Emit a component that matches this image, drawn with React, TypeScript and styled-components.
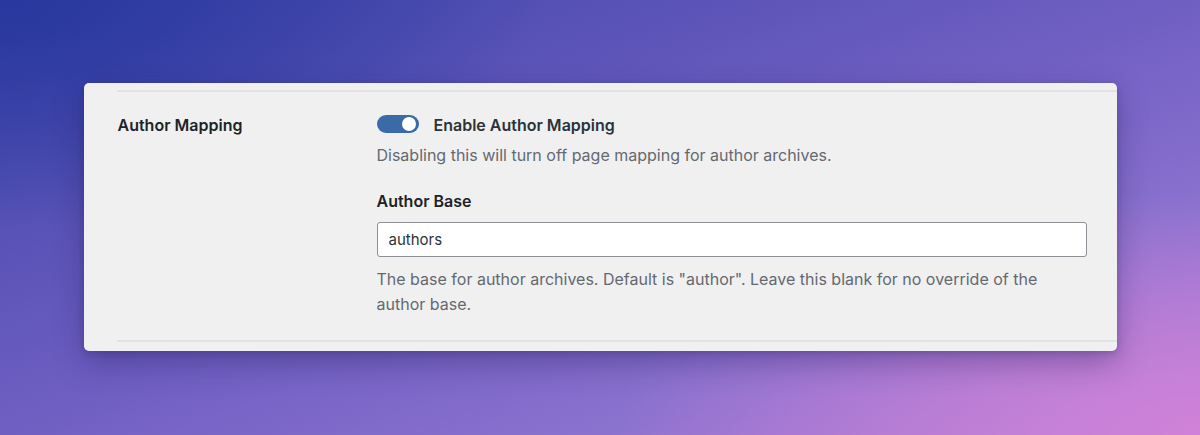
import styled, { createGlobalStyle } from "styled-components";

const GlobalStyle = createGlobalStyle`
    html, body {
        margin: 0;
        padding: 0;
    }
    body {
        font-family: Inter, "Noto Sans", sans-serif;
        -webkit-font-smoothing: antialiased;
    }
`;

type ToggleProps = {
    on: boolean;
};

export default function App() {
    return (
        <>
            <GlobalStyle />
            <Backdrop>
                <SettingsCard>
                    <Rule />
                    <SettingsRow>
                        <RowLabel>Author Mapping</RowLabel>
                        <RowField>
                            <ToggleLine>
                                <Toggle on={true}>
                                    <Knob on={true} />
                                </Toggle>
                                <ToggleText>Enable Author Mapping</ToggleText>
                            </ToggleLine>
                            <HelpText>Disabling this will turn off page mapping for author archives.</HelpText>
                            <FieldLabel>Author Base</FieldLabel>
                            <TextInput defaultValue="authors" />
                            <HelpText wide>
                                The base for author archives. Default is "author". Leave this blank for no override of the author base.
                            </HelpText>
                        </RowField>
                    </SettingsRow>
                    <Rule />
                </SettingsCard>
            </Backdrop>
        </>
    );
}

const Backdrop = styled.div`
    width: 1200px;
    height: 435px;
    box-sizing: border-box;
    padding-top: 83px;
    display: flex;
    justify-content: center;
    align-items: flex-start;
    background:
        radial-gradient(ellipse 70% 80% at 100% 100%, rgba(208, 130, 216, 0.95), rgba(208, 130, 216, 0) 70%),
        radial-gradient(ellipse 60% 70% at 0% 0%, rgba(40, 56, 158, 1), rgba(40, 56, 158, 0) 75%),
        linear-gradient(160deg, #3d44a8 0%, #6b5cc0 45%, #8b72cf 75%, #b97fd6 100%);
    overflow: hidden;
`;

const SettingsCard = styled.section`
    width: 1033px;
    height: 268px;
    box-sizing: border-box;
    padding: 7px 0 0 33px;
    background: #f0f0f1;
    border-radius: 5px;
    box-shadow: 0 12px 30px rgba(35, 25, 90, 0.35), 0 2px 6px rgba(35, 25, 90, 0.2);
    display: flex;
    flex-direction: column;
`;

const Rule = styled.div`
    height: 2px;
    background: #e3e3e6;
`;

const SettingsRow = styled.div`
    display: grid;
    grid-template-columns: 259px 710px;
    padding: 21px 0 23px 1px;
    height: 248px;
    box-sizing: border-box;
`;

const RowLabel = styled.div`
    font-size: 16px;
    font-weight: 600;
    line-height: 24px;
    color: #1d2327;
`;

const RowField = styled.div`
    display: flex;
    flex-direction: column;
    align-items: flex-start;
`;

const ToggleLine = styled.div`
    display: flex;
    align-items: center;
    height: 24px;
    gap: 15px;
`;

const Toggle = styled.div<ToggleProps>`
    width: 42px;
    height: 18px;
    margin-top: -3px;
    border-radius: 9px;
    background: ${(p) => (p.on ? "#3a6aa8" : "#8c8f94")};
    display: flex;
    align-items: center;
    justify-content: ${(p) => (p.on ? "flex-end" : "flex-start")};
    padding: 0 3px;
    box-sizing: border-box;
`;

const Knob = styled.span<ToggleProps>`
    width: 14px;
    height: 14px;
    border-radius: 50%;
    background: #ffffff;
`;

const ToggleText = styled.span`
    font-size: 16px;
    font-weight: 600;
    line-height: 24px;
    color: #2c3338;
`;

const HelpText = styled.p<{ wide?: boolean }>`
    margin: ${(p) => (p.wide ? "10px 0 0" : "6px 0 0")};
    max-width: ${(p) => (p.wide ? "705px" : "none")};
    font-size: 16px;
    line-height: 25px;
    color: #646970;
`;

const FieldLabel = styled.div`
    margin-top: 21px;
    font-size: 16px;
    font-weight: 600;
    line-height: 24px;
    color: #1d2327;
`;

const TextInput = styled.input`
    margin-top: 9px;
    width: 710px;
    height: 35px;
    box-sizing: border-box;
    padding: 0 11px;
    border: 1px solid #8c8f94;
    border-radius: 3px;
    background: #ffffff;
    font-family: Inter, "Noto Sans", sans-serif;
    font-size: 15px;
    color: #2c3338;
    outline: none;
`;
